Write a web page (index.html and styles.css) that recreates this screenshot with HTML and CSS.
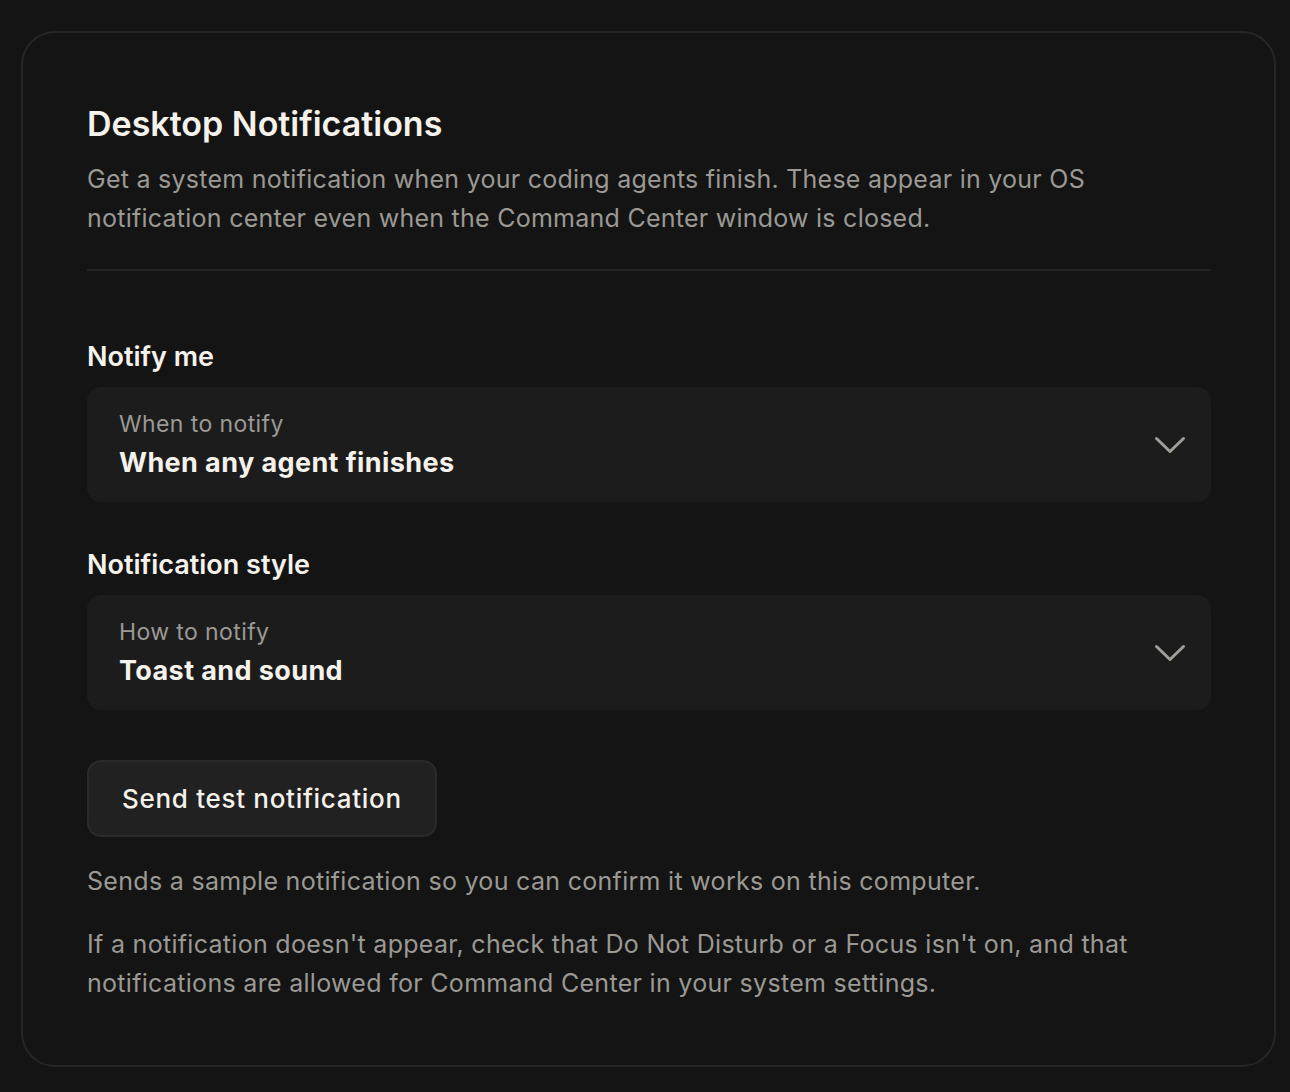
FILE: index.html
```html
<!DOCTYPE html>
<html lang="en">
<head>
  <meta charset="UTF-8">
  <title>Desktop Notifications</title>
  <meta name="viewport" content="width=device-width,initial-scale=1">
  <link rel="stylesheet" href="styles.css">
</head>
<body>
<main class="card">
  <h1>Desktop Notifications</h1>
  <p class="lead">Get a system notification when your coding agents finish. These appear in your OS notification center even when the Command Center window is closed.</p>
  <hr class="divider">

  <h2 class="field-label">Notify me</h2>
  <div class="select">
    <div class="select-text">
      <span class="select-hint">When to notify</span>
      <span class="select-value">When any agent finishes</span>
    </div>
    <svg class="chevron" width="34" height="20" viewBox="0 0 34 20" fill="none"><path d="M3.5 3.5 L17 16.5 L30.5 3.5" stroke="#a09e99" stroke-width="3" stroke-linecap="round" stroke-linejoin="round"/></svg>
  </div>

  <h2 class="field-label second">Notification style</h2>
  <div class="select">
    <div class="select-text">
      <span class="select-hint">How to notify</span>
      <span class="select-value">Toast and sound</span>
    </div>
    <svg class="chevron" width="34" height="20" viewBox="0 0 34 20" fill="none"><path d="M3.5 3.5 L17 16.5 L30.5 3.5" stroke="#a09e99" stroke-width="3" stroke-linecap="round" stroke-linejoin="round"/></svg>
  </div>

  <button class="btn">Send test notification</button>
  <p class="help">Sends a sample notification so you can confirm it works on this computer.</p>
  <p class="help second">If a notification doesn't appear, check that Do Not Disturb or a Focus isn't on, and that notifications are allowed for Command Center in your system settings.</p>
</main>
</body>
</html>
```

FILE: styles.css
```css
body {
  font-family: Inter, "Noto Sans", sans-serif;
  background: #141414;
  margin: 0;
  padding: 31px 14px 25px 21px;
  color: #f5f2ec;
}
.card {
  border: 2px solid #262626;
  border-radius: 34px;
  padding: 71px 63px 62px 64px;
  height: 1036px;
  box-sizing: border-box;
}
h1 {
  margin: 0;
  font-size: 34px;
  line-height: 40px;
  font-weight: 600;
}
.lead {
  margin: 16px 0 0 0;
  font-size: 25px;
  line-height: 39px;
  letter-spacing: 0.25px;
  color: #9b9994;
}
.divider {
  border: 0;
  height: 2px;
  background: #242424;
  margin: 31px 0 0 0;
}
.field-label {
  margin: 70px 0 14px 0;
  font-size: 27px;
  line-height: 32px;
  font-weight: 600;
}
.field-label.second {
  margin-top: 47px;
}
.select {
  background: #1c1c1c;
  border-radius: 14px;
  height: 115px;
  box-sizing: border-box;
  padding: 22px 24px 0 32px;
  display: flex;
  align-items: center;
  justify-content: space-between;
}
.select-text {
  display: flex;
  flex-direction: column;
  align-self: flex-start;
}
.select-hint {
  font-size: 23px;
  line-height: 30px;
  letter-spacing: 0.4px;
  color: #9b9994;
}
.select-value {
  font-size: 27px;
  line-height: 32px;
  font-weight: 700;
  letter-spacing: 0.4px;
  margin-top: 8px;
}
.chevron {
  margin-top: -22px;
}
.btn {
  display: block;
  margin-top: 50px;
  height: 77px;
  padding: 0 33px;
  background: #212121;
  border: 2px solid #2a2a2a;
  border-radius: 14px;
  color: #f5f2ec;
  font-family: inherit;
  font-size: 26px;
  font-weight: 500;
  letter-spacing: 0.7px;
}
.help {
  margin: 25px 0 0 0;
  font-size: 25px;
  line-height: 39px;
  letter-spacing: 0.3px;
  color: #9b9994;
}
.help.second {
  margin-top: 24px;
}
```
